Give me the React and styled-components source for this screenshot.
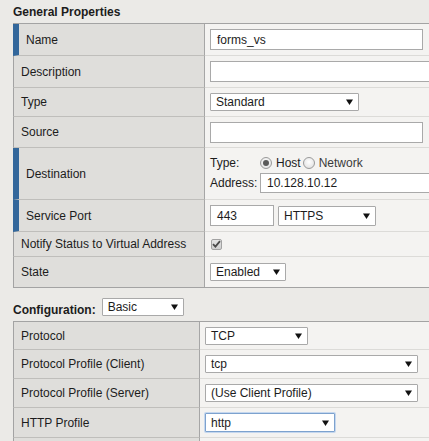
import React from "react";
import styled, { createGlobalStyle } from "styled-components";

const GlobalStyle = createGlobalStyle`
  html, body {
    margin: 0;
    padding: 0;
    background: #ebeae7;
    overflow: hidden;
  }
  body {
    font-family: "Liberation Sans", Arial, sans-serif;
    font-size: 12px;
    color: #1c1c1c;
  }
`;

const Page = styled.div`
  width: 429px;
  height: 441px;
  overflow: hidden;
  box-sizing: border-box;
  padding-top: 5px;
`;

const Heading = styled.div`
  font-weight: 700;
  line-height: 15px;
  padding-left: 13px;
  margin-bottom: 3px;
`;

const Panel = styled.div`
  width: 440px;
  margin-left: 13px;
  border-top: 1px solid #a3a3a3;
  border-bottom: 1px solid #a3a3a3;
`;

const Row = styled.div`
  display: flex;
  height: ${(p) => p.$h}px;
`;

const LabelCell = styled.div`
  box-sizing: border-box;
  width: ${(p) => p.$w}px;
  flex-shrink: 0;
  display: flex;
  align-items: center;
  background: #dfdedb;
  border-left: ${(p) => (p.$marked ? "6px solid #33679b" : "1px solid #a3a3a3")};
  border-right: 1px solid #a6a6a6;
  border-bottom: 1px solid #bfbebb;
  padding-left: 7px;
  ${Row}:last-child & {
    border-bottom: none;
  }
`;

const ValueCell = styled.div`
  flex: 1;
  display: flex;
  align-items: center;
  gap: 4px;
  background: #f4f3f1;
  border-bottom: 1px solid #dcdbd8;
  padding-left: 5px;
  ${Row}:last-child & {
    border-bottom: none;
  }
`;

const TextInput = styled.div`
  box-sizing: border-box;
  width: ${(p) => p.$w}px;
  height: ${(p) => p.$h || 21}px;
  background: #fff;
  border: 1px solid #a9a9a9;
  padding-left: 6px;
  display: flex;
  align-items: center;
  flex-shrink: 0;
`;

const SelectBox = styled.div`
  box-sizing: border-box;
  width: ${(p) => p.$w}px;
  height: ${(p) => p.$h || 18}px;
  background: #fff;
  border: 1px solid ${(p) => (p.$focus ? "#7da2ce" : "#a9a9a9")};
  box-shadow: ${(p) => (p.$focus ? "0 0 0 1px #c5d7ee" : "none")};
  border-radius: 1px;
  padding: 0 5px 0 5px;
  display: flex;
  align-items: center;
  justify-content: space-between;
  flex-shrink: 0;
`;

const Arrow = () => (
  <svg width="7" height="6" viewBox="0 0 7 6">
    <path d="M0 0.5 H7 L3.5 6 Z" fill="#111" />
  </svg>
);

function Select({ w, h, focus, children }) {
  return (
    <SelectBox $w={w} $h={h} $focus={focus}>
      <span>{children}</span>
      <Arrow />
    </SelectBox>
  );
}

const DestBlock = styled.div`
  display: flex;
  flex-direction: column;
  gap: 3px;
  padding-top: 2px;
`;

const DestLine = styled.div`
  display: flex;
  align-items: center;
  height: ${(p) => p.$h}px;
`;

const DestKey = styled.span`
  width: 50px;
  flex-shrink: 0;
`;

const RadioDot = styled.span`
  box-sizing: border-box;
  width: 12px;
  height: 12px;
  border-radius: 50%;
  border: 1px solid #9a9a9a;
  background: radial-gradient(circle at 50% 40%, #ffffff 0%, #e6e6e6 70%, #d6d6d6 100%);
  display: inline-flex;
  align-items: center;
  justify-content: center;
  margin-right: 4px;
  &::after {
    content: "";
    width: 6px;
    height: 6px;
    border-radius: 50%;
    background: ${(p) => (p.$on ? "#5a5a5a" : "transparent")};
  }
`;

const RadioLabel = styled.span`
  margin-right: 2px;
  color: ${(p) => (p.$dim ? "#3a3a3a" : "#1c1c1c")};
`;

const CheckBox = styled.span`
  box-sizing: border-box;
  width: 11px;
  height: 11px;
  border: 1px solid #a2a2a2;
  border-radius: 2px;
  background: linear-gradient(#e4e4e4, #cfcfcf);
  display: inline-flex;
  align-items: center;
  justify-content: center;
  margin-left: 1px;
`;

const ConfigBar = styled.div`
  display: flex;
  align-items: flex-start;
  gap: 6px;
  padding: 10px 0 5px 13px;
  height: 33px;
  box-sizing: border-box;
`;

const ConfigTitle = styled.span`
  font-weight: 700;
  line-height: 15px;
  margin-top: 5px;
`;

export default function App() {
  const L1 = 192;
  const L2 = 187;
  return (
    <>
      <GlobalStyle />
      <Page>
        <Heading>General Properties</Heading>
        <Panel>
          <Row $h={32}>
            <LabelCell $w={L1} $marked>Name</LabelCell>
            <ValueCell>
              <TextInput $w={213}>forms_vs</TextInput>
            </ValueCell>
          </Row>
          <Row $h={32}>
            <LabelCell $w={L1}>Description</LabelCell>
            <ValueCell>
              <TextInput $w={230} />
            </ValueCell>
          </Row>
          <Row $h={29}>
            <LabelCell $w={L1}>Type</LabelCell>
            <ValueCell>
              <Select w={149}>Standard</Select>
            </ValueCell>
          </Row>
          <Row $h={31}>
            <LabelCell $w={L1}>Source</LabelCell>
            <ValueCell>
              <TextInput $w={213} />
            </ValueCell>
          </Row>
          <Row $h={52}>
            <LabelCell $w={L1} $marked>Destination</LabelCell>
            <ValueCell>
              <DestBlock>
                <DestLine $h={14}>
                  <DestKey>Type:</DestKey>
                  <RadioDot $on />
                  <RadioLabel>Host</RadioLabel>
                  <RadioDot />
                  <RadioLabel $dim>Network</RadioLabel>
                </DestLine>
                <DestLine $h={20}>
                  <DestKey>Address:</DestKey>
                  <TextInput $w={190} $h={20}>10.128.10.12</TextInput>
                </DestLine>
              </DestBlock>
            </ValueCell>
          </Row>
          <Row $h={32}>
            <LabelCell $w={L1} $marked>Service Port</LabelCell>
            <ValueCell>
              <TextInput $w={64}>443</TextInput>
              <Select w={98} h={20}>HTTPS</Select>
            </ValueCell>
          </Row>
          <Row $h={25}>
            <LabelCell $w={L1}>Notify Status to Virtual Address</LabelCell>
            <ValueCell>
              <CheckBox>
                <svg width="9" height="8" viewBox="0 0 9 8">
                  <path d="M1 4.2 L3.4 6.6 L8 1.2" fill="none" stroke="#4a4a4a" strokeWidth="1.8" />
                </svg>
              </CheckBox>
            </ValueCell>
          </Row>
          <Row $h={30}>
            <LabelCell $w={L1}>State</LabelCell>
            <ValueCell>
              <Select w={76}>Enabled</Select>
            </ValueCell>
          </Row>
        </Panel>

        <ConfigBar>
          <ConfigTitle>Configuration:</ConfigTitle>
          <Select w={82}>Basic</Select>
        </ConfigBar>

        <Panel>
          <Row $h={28}>
            <LabelCell $w={L2}>Protocol</LabelCell>
            <ValueCell>
              <Select w={103}>TCP</Select>
            </ValueCell>
          </Row>
          <Row $h={29}>
            <LabelCell $w={L2}>Protocol Profile (Client)</LabelCell>
            <ValueCell>
              <Select w={213}>tcp</Select>
            </ValueCell>
          </Row>
          <Row $h={29}>
            <LabelCell $w={L2}>Protocol Profile (Server)</LabelCell>
            <ValueCell>
              <Select w={213}>(Use Client Profile)</Select>
            </ValueCell>
          </Row>
          <Row $h={30}>
            <LabelCell $w={L2}>HTTP Profile</LabelCell>
            <ValueCell>
              <Select w={130} h={19} focus>http</Select>
            </ValueCell>
          </Row>
          <Row $h={30}>
            <LabelCell $w={L2} />
            <ValueCell />
          </Row>
        </Panel>
      </Page>
    </>
  );
}
